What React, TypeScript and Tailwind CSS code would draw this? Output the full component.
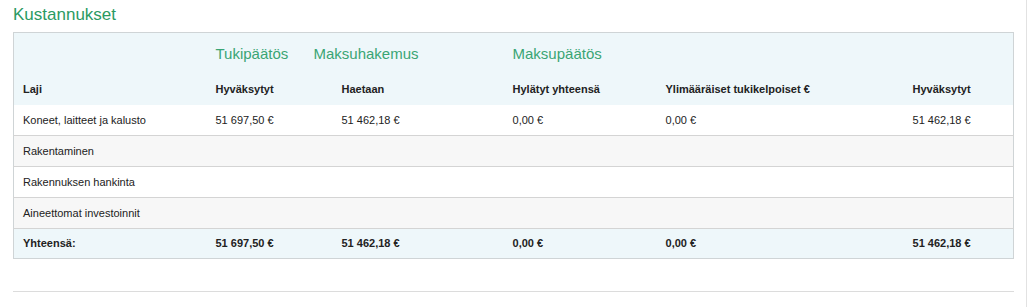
import React from "react"

interface Row {
    laji: string
    tuki?: string
    haetaan?: string
    hylatyt?: string
    ylim?: string
    hyv?: string
}

const rows: Row[] = [
    { laji: "Koneet, laitteet ja kalusto", tuki: "51 697,50 €", haetaan: "51 462,18 €", hylatyt: "0,00 €", ylim: "0,00 €", hyv: "51 462,18 €" },
    { laji: "Rakentaminen" },
    { laji: "Rakennuksen hankinta" },
    { laji: "Aineettomat investoinnit" },
]

const App: React.FC = () => {
    return (
        <div className="flex w-[1036px] h-[307px] bg-white font-['Liberation_Sans',Arial,sans-serif] text-[#222]">
            <div className="w-[1027px] border-r border-[#e2e2e2] pl-[13px] pr-[12px]">
                <h2 className="text-[17px] leading-[20px] text-[#2b9a62] pt-[5px] h-[32px]">Kustannukset</h2>
                <table className="w-[1001px] table-fixed border-collapse border border-[#cfd4d6] text-[11px]">
                    <colgroup>
                        <col className="w-[193px]" />
                        <col className="w-[126px]" />
                        <col className="w-[171px]" />
                        <col className="w-[153px]" />
                        <col className="w-[247px]" />
                        <col />
                    </colgroup>
                    <thead className="bg-[#eef7fa]">
                        <tr className="h-[37px]">
                            <th></th>
                            <th colSpan={2} className="text-left font-normal text-[15px] text-[#3aa574] pl-[9px] pt-[6px]">
                                <div className="flex">
                                    <span className="w-[98px]">Tukipäätös</span>
                                    <span>Maksuhakemus</span>
                                </div>
                            </th>
                            <th colSpan={3} className="text-left font-normal text-[15px] text-[#3aa574] pl-[9px] pt-[6px]">Maksupäätös</th>
                        </tr>
                        <tr className="h-[35px] text-left">
                            <th className="pl-[9px] pt-[4px]">Laji</th>
                            <th className="pl-[9px] pt-[4px]">Hyväksytyt</th>
                            <th className="pl-[9px] pt-[4px]">Haetaan</th>
                            <th className="pl-[9px] pt-[4px]">Hylätyt yhteensä</th>
                            <th className="pl-[9px] pt-[4px]">Ylimääräiset tukikelpoiset €</th>
                            <th className="pl-[9px] pt-[4px]">Hyväksytyt</th>
                        </tr>
                    </thead>
                    <tbody>
                        {rows.map((r, i) => (
                            <tr key={r.laji} className={`h-[31px] border-b border-[#d4d4d4] ${i % 2 === 1 ? "bg-[#f7f7f7]" : "bg-white"}`}>
                                <td className="pl-[9px]">{r.laji}</td>
                                <td className="pl-[9px]">{r.tuki}</td>
                                <td className="pl-[9px]">{r.haetaan}</td>
                                <td className="pl-[9px]">{r.hylatyt}</td>
                                <td className="pl-[9px]">{r.ylim}</td>
                                <td className="pl-[9px]">{r.hyv}</td>
                            </tr>
                        ))}
                        <tr className="h-[30px] bg-[#eef7fa] font-bold">
                            <td className="pl-[9px]">Yhteensä:</td>
                            <td className="pl-[9px]">51 697,50 €</td>
                            <td className="pl-[9px]">51 462,18 €</td>
                            <td className="pl-[9px]">0,00 €</td>
                            <td className="pl-[9px]">0,00 €</td>
                            <td className="pl-[9px]">51 462,18 €</td>
                        </tr>
                    </tbody>
                </table>
                <hr className="mt-[32px] border-[#dcdcdc] w-[1001px]" />
            </div>
        </div>
    )
}

export default App
